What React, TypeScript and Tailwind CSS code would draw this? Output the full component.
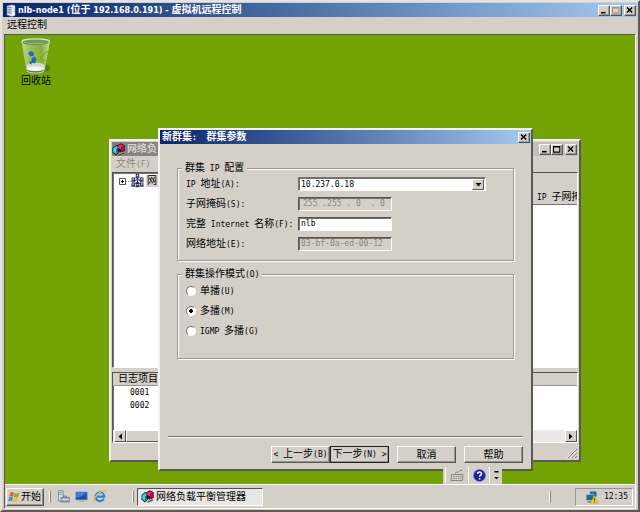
import type { ReactNode } from "react";
import { clsx } from "clsx";

const RAISED = "border border-t-white border-l-white border-r-[#555555] border-b-[#555555] bg-[#d4d0c8]";
const SUNKEN = "border border-t-[#555555] border-l-[#555555] border-r-white border-b-white";

// Latin runs are set in the narrow fixed-width face, Chinese runs in the larger one
function Mixed({ text, latin }: { text: string; latin?: string }) {
  return (
    <span className="whitespace-pre">
      {text.split(/([\x20-\x7e]+)/).map((part, index) =>
        index % 2 ? (
          <span key={index} className={latin ?? "font-['DejaVu_Sans_Mono','Liberation_Mono',monospace] text-[8px]"}>
            {part}
          </span>
        ) : (
          part
        ),
      )}
    </span>
  );
}

function CaptionButton({ kind, disabled }: { kind: "min" | "max" | "close"; disabled?: boolean }) {
  const labels = { min: "最小化", max: "最大化", close: "关闭" };
  const stroke = disabled ? "#9a968e" : "#000";

  return (
    <button aria-label={labels[kind]} className={clsx(RAISED, "flex h-[11px] w-3 items-center justify-center shadow-[inset_-1px_-1px_0_#a09c94]")}>
      <svg width="10" height="9" viewBox="0 0 10 9" fill="none" stroke={stroke}>
        {kind === "min" && <path d="M2 6.7h4.6" strokeWidth="1.6" />}
        {kind === "max" && <path d="M1.5 1.5h6.3v5.6H1.5zM1.5 2h6.3" strokeWidth="1.1" />}
        {kind === "close" && <path d="M2 1.5l5.2 5M7.2 1.5l-5.2 5" strokeWidth="1.5" />}
      </svg>
    </button>
  );
}

function ClusterIcon() {
  return (
    <svg width="13" height="13" viewBox="0 0 13 13">
      <path d="M.5 5 4 2l3 1v6.500L4 12.500.500 9.500z" fill="#0d1c24" />
      <path d="M1.200 5.200 4.200 3l2 1v5L4 11.300 1.200 9z" fill="#39d6dc" />
      <path d="M4 6.500l2.500-1.500v4.500L4 11.300z" fill="#167f8c" />
      <path d="M5.500 2 9 .3l3.700 2V8L9 9.800 5.500 8z" fill="#3a0820" />
      <path d="M6 2.600 9 1.200l2.900 1.600V5L9 6.500 6 5z" fill="#ea2a72" />
      <path d="M9 3.800l3-1.300v5L9 9z" fill="#a50f3e" />
      <path d="M6.500 10.500l5-2v2.200l-4 1.800z" fill="#c9a24a" />
      <path d="M6.500 12.300 12 10" stroke="#222" strokeWidth=".8" />
    </svg>
  );
}

function ServerIcon() {
  return (
    <svg width="10" height="13" viewBox="0 0 10 13">
      <path d="M1 2l5-1.3 3 1v9.8L5.5 12.5 1 11z" fill="#dfe8f4" stroke="#7388ad" strokeWidth=".6" />
      <path d="M1.5 3.5h4M1.5 5.3h4M1.5 7.1h4M1.5 8.9h4" stroke="#5572a5" strokeWidth=".8" />
      <path d="M6 2v10l3-1V2z" fill="#f9fbff" />
      <path d="M6.5 4H9M6.5 6H9M6.5 8H9" stroke="#8ea0bf" strokeWidth=".6" />
    </svg>
  );
}

function NetworkIcon() {
  return (
    <svg width="13" height="14" viewBox="0 0 13 14">
      <path d="M6.500 4v8M2.500 7l4-1.500 4 1.500M3 10l3.500-2 3.500 2" stroke="#2222c4" strokeWidth="1" fill="none" />
      {[
        [6.5, 1.9],
        [2.3, 5.2],
        [10.7, 5.2],
        [2.3, 10.2],
        [10.7, 10.2],
        [6.5, 10.8],
      ].map(([x, y]) => (
        <g key={`${x}-${y}`}>
          <rect x={x - 1.3} y={y - 1.3} width="2.6" height="2.3" fill="#d5d8f4" stroke="#1a1a2a" strokeWidth=".8" />
          <path d={`M${x - 2} ${y + 1.9}h4`} stroke="#111" strokeWidth="1" />
        </g>
      ))}
    </svg>
  );
}

function RecycleBinIcon() {
  return (
    <svg width="30" height="36" viewBox="0 0 30 36">
      <defs>
        <linearGradient id="glass" x1="0" x2="1">
          <stop offset="0" stopColor="#c4dba2" stopOpacity=".9" />
          <stop offset=".35" stopColor="#9cc766" stopOpacity=".75" />
          <stop offset=".7" stopColor="#8dba48" stopOpacity=".7" />
          <stop offset="1" stopColor="#cfe2b4" stopOpacity=".9" />
        </linearGradient>
      </defs>
      <ellipse cx="23" cy="30" rx="6.500" ry="4" fill="#4c7503" opacity=".7" />
      <path d="M1 3.500 6 33c1 3 15.500 3 17 0L28.500 3.500z" fill="url(#glass)" stroke="#b5cf8c" strokeWidth=".8" />
      <path d="M5.500 27c5-3 13-3 18.500 0l-1 6c-3 2.500-14 2.500-17 0z" fill="#d9dfd8" opacity=".9" />
      <path d="M6 30c4-2 13-2 17.500 0l-.5 3c-3 2.500-14 2.500-17 0z" fill="#f3f5f3" />
      <path d="M6 32.500c3 3 14 3 17 0v-1c-4 2-13 2-17 0z" fill="#6b736b" />
      <path d="M7 15l3-2 3 2-.5 3-3 .5zM11 20l3-1.500 1.500 3-1.500 4-4-1zM8 23l2 1 1 2.500-2-.5z" fill="#2265c4" />
      <path d="M27 13 19 20l5 3" stroke="#6d9f22" strokeWidth="1" fill="none" />
      <ellipse cx="14.800" cy="3.500" rx="13.800" ry="2.600" fill="#6f9a55" stroke="#d5e0cb" strokeWidth="1.100" />
      <path d="M2 4.500c3 2.500 22 2.500 25.500 0" stroke="#4d6650" strokeWidth=".9" fill="none" />
    </svg>
  );
}

function StartIcon() {
  return (
    <svg width="12" height="12" viewBox="0 0 12 12">
      <path d="M2.300 1.600C4 .8 5 1 6 1.700L5 5.700C4 5 3 5 1.300 5.600z" fill="#e9602c" />
      <path d="M6.600 2c1.400.7 2.800.6 4.800-.2l-1 4C8.700 6.600 7 6.600 5.700 6z" fill="#7cb342" />
      <path d="M1.100 6.300C3 5.500 4 5.700 4.900 6.300L4 10.200C3 9.500 1.800 9.500.2 10.200z" fill="#3f8fdc" />
      <path d="M5.500 6.700c1.500.8 2.900.6 4.700-.1l-1 4c-1.800.8-3.400.7-4.700 0z" fill="#f6bd28" />
    </svg>
  );
}

function QuickLaunch() {
  return (
    <div className="flex items-center gap-[5px]">
      <button aria-label="服务器管理器">
        <svg width="13" height="13" viewBox="0 0 13 13">
          <path d="M1.500.8h4.700V11H1.500z" fill="#d7dee4" stroke="#6f7f8b" strokeWidth=".8" />
          <path d="M2 2.500h3.600M2 4.300h3.600" stroke="#7d93a5" strokeWidth=".8" />
          <path d="M4 7.500h8.300v4.500H4z" fill="#9aa8b2" stroke="#5f6f7a" strokeWidth=".7" />
          <path d="M4.500 9.300h7.400" stroke="#e9eef1" strokeWidth=".8" />
          <path d="M6.500 7.300V6.200h3v1.100" stroke="#5f6f7a" strokeWidth=".8" fill="none" />
        </svg>
      </button>
      <button aria-label="显示桌面">
        <svg width="13" height="13" viewBox="0 0 13 13">
          <path d="M.7 2h11.600v8H.7z" fill="#1b4fae" stroke="#8aa5cf" strokeWidth=".8" />
          <path d="M1.300 2.500h10.200L7 6 1.300 8z" fill="#3f80dc" />
          <path d="M4 11.300h5.500" stroke="#a3adba" strokeWidth="1" />
        </svg>
      </button>
      <button aria-label="Internet Explorer">
        <svg width="14" height="13" viewBox="0 0 14 13" fill="none">
          <path d="M10.800 8.600A4.300 4.300 0 1 1 11.200 6.700H4.200" stroke="#1c86d8" strokeWidth="2.200" />
          <path d="M10 4.200a4.300 4.300 0 0 0-6.800 1" stroke="#7cc8f4" strokeWidth=".9" />
          <path d="M1.500 11.800C-.3 9.800 4 3.500 9 1.300c2.500-1.100 4-.6 3.600 1.200" stroke="#edb52e" strokeWidth="1.200" />
        </svg>
      </button>
    </div>
  );
}

function TrayIcon() {
  return (
    <svg width="14" height="14" viewBox="0 0 14 14">
      <rect x="4.500" y="1" width="7.500" height="6" rx=".6" fill="#2c6ea5" stroke="#c8d7e2" strokeWidth=".8" />
      <rect x="1.200" y="4.500" width="7.500" height="6" rx=".6" fill="#1e6796" stroke="#a8bccb" strokeWidth=".8" />
      <path d="M2.500 12h5" stroke="#587082" strokeWidth="1.200" />
      <path d="M9.300 5.800 13.400 13H5.400z" fill="#f7d62f" stroke="#b8931a" strokeWidth=".6" />
      <path d="M9.400 8.200v2.400M9.400 11.300v1" stroke="#332a00" strokeWidth="1" />
    </svg>
  );
}

function PushButton({ children, isDefault }: { children: ReactNode; isDefault?: boolean }) {
  return (
    <button
      className={clsx(
        RAISED,
        "flex h-[17px] w-[59px] items-center justify-center whitespace-nowrap shadow-[inset_-1px_-1px_0_#9a968e]",
        isDefault && "outline outline-1 -outline-offset-1 outline-[#222222]",
      )}
    >
      {children}
    </button>
  );
}

function GroupBox({ title, className, children }: { title: string; className?: string; children: ReactNode }) {
  return (
    <fieldset className="min-w-0 border border-[#9a968e] pr-2 pl-2 shadow-[1px_1px_0_#ffffff,inset_1px_1px_0_#ffffff]">
      <legend className="-ml-1 h-3 bg-[#d4d0c8] px-[3px] leading-3">
        <Mixed text={title} />
      </legend>
      <div className={className}>{children}</div>
    </fieldset>
  );
}

const FIELD = "h-[14px] w-[94px] px-[2px] text-[8px] font-['DejaVu_Sans_Mono','Liberation_Mono',monospace] shadow-[inset_1px_1px_0_#77736b]";

const modes = [
  { id: "unicast", label: "单播(U)" },
  { id: "multicast", label: "多播(M)" },
  { id: "igmp", label: "IGMP 多播(G)" },
];

function ClusterDialog() {
  return (
    <section className="absolute top-[93px] left-[153px] w-[375px] border-2 border-t-[#f4f2ee] border-r-[#5c5a55] border-b-[#5c5a55] border-l-[#f4f2ee] bg-[#d4d0c8]">
      <header className="flex h-[14px] items-center justify-between bg-linear-to-r from-[#0a246a] to-[#a6caf0] pr-px pl-[2px] font-bold text-white">
        <h2>
          <Mixed text="新群集:  群集参数" />
        </h2>
        <CaptionButton kind="close" />
      </header>

      <form className="flex flex-col pt-[18px] pb-[6px]">
        <div className="flex flex-col gap-[7px] px-[17px]">
          <GroupBox title="群集 IP 配置" className="grid auto-rows-[14px] grid-cols-[112px_1fr] items-center gap-y-[6px] pt-[3px] pb-[9px] leading-[14px]">
            <label htmlFor="ip">
              <Mixed text="IP 地址(A):" />
            </label>
            <div className="relative h-[14px] w-[188px]">
              <select id="ip" className={clsx(FIELD, "block w-full appearance-none border border-white border-t-[#77736b] border-l-[#77736b] bg-white")}>
                <option>10.237.0.18</option>
              </select>
              <span className={clsx(RAISED, "pointer-events-none absolute top-[2px] right-[2px] flex h-[11px] w-3 items-center justify-center")}>
                <svg width="7" height="4" viewBox="0 0 7 4">
                  <path d="M.5 0h6l-3 3.500z" />
                </svg>
              </span>
            </div>
            <label htmlFor="mask">
              <Mixed text="子网掩码(S):" />
            </label>
            <input id="mask" disabled defaultValue="255 .255 . 0  . 0" className={clsx(SUNKEN, FIELD, "pl-[4px] text-[#8c8880]")} />
            <label htmlFor="name">
              <Mixed text="完整 Internet 名称(F):" />
            </label>
            <input id="name" defaultValue="nlb" className={clsx(SUNKEN, FIELD, "bg-white")} />
            <label htmlFor="mac">
              <Mixed text="网络地址(E):" />
            </label>
            <input id="mac" disabled defaultValue="03-bf-0a-ed-00-12" className={clsx(SUNKEN, FIELD, "text-[#8c8880]")} />
          </GroupBox>

          <GroupBox title="群集操作模式(O)" className="flex flex-col gap-[6px] pt-1 pb-5 leading-[14px]">
            {modes.map((mode) => (
              <label key={mode.id} className="flex h-[14px] items-center gap-1">
                <input
                  type="radio"
                  name="mode"
                  defaultChecked={mode.id === "multicast"}
                  className="size-[10px] appearance-none rounded-full border border-t-[#77736b] border-r-white border-b-white border-l-[#77736b] bg-white checked:bg-[radial-gradient(circle,#000_0_2px,#fff_2px)]"
                />
                <Mixed text={mode.label} />
              </label>
            ))}
          </GroupBox>
        </div>

        <div className="mx-2 mt-[77px] border-t border-[#77736b] border-b border-b-white" />

        <div className="mt-2 flex justify-end gap-2 px-2">
          <div className="flex">
            <PushButton>
              <Mixed text="< 上一步(B)" />
            </PushButton>
            <PushButton isDefault>
              <Mixed text="下一步(N) >" />
            </PushButton>
          </div>
          <PushButton>取消</PushButton>
          <PushButton>帮助</PushButton>
        </div>
      </form>
    </section>
  );
}

function ManagerWindow() {
  return (
    <section className="absolute top-[104px] left-[104px] w-[472px] border-2 border-t-[#f4f2ee] border-r-[#5c5a55] border-b-[#5c5a55] border-l-[#f4f2ee] bg-[#d4d0c8] p-px">
      <header className="flex h-[14px] items-center justify-between bg-linear-to-r from-[#808080] to-[#c9c6bf] pr-px text-[#d4d0c8]">
        <h2 className="flex items-center gap-[2px] font-bold">
          <ClusterIcon />
          网络负
        </h2>
        <div className="flex">
          <CaptionButton kind="min" />
          <CaptionButton kind="max" />
          <span className="w-[2px]" />
          <CaptionButton kind="close" />
        </div>
      </header>
      <nav className="h-4 pl-1 leading-4 text-[#8c8880]">
        <button>
          <Mixed text="文件(F)" />
        </button>
      </nav>

      <div className="flex h-[196px]">
        <div className={clsx(SUNKEN, "w-40 bg-white shadow-[inset_1px_1px_0_#77736b]")}>
          <div className="flex items-center pt-px pl-[6px]">
            <svg width="7" height="7" viewBox="0 0 7 7" fill="none" stroke="#555">
              <path d="M.5.5h6v6h-6z" />
              <path d="M2 3.500h3M3.500 2v3" stroke="#000" />
            </svg>
            <span className="w-[5px] border-t border-dotted border-[#9a968e]" />
            <NetworkIcon />
            <span className="ml-[2px] bg-[#d4d0c8] px-px leading-3">网</span>
          </div>
        </div>
        <div className={clsx(SUNKEN, "flex min-w-0 flex-1 flex-col bg-white")}>
          <div className="h-[18px] shrink-0 bg-[#d4d0c8]" />
          <table className="w-full table-fixed bg-[#d4d0c8] text-left leading-3">
            <thead>
              <tr className="border-b border-[#77736b]">
                <td />
                <th className="w-10 overflow-hidden p-0 font-normal">
                  <Mixed text="IP 子网掩" />
                </th>
              </tr>
            </thead>
          </table>
        </div>
      </div>

      <div className={clsx(SUNKEN, "mt-1 flex h-[71px] flex-col bg-white shadow-[inset_1px_1px_0_#77736b]")}>
        <table className="w-full text-left">
          <thead className="bg-[#d4d0c8] leading-3">
            <tr className="border-b border-[#9a968e]">
              <th className="p-0 pl-[5px] font-normal">日志项目</th>
            </tr>
          </thead>
          <tbody className="font-['DejaVu_Sans_Mono','Liberation_Mono',monospace] text-[8px] leading-[13px]">
            <tr>
              <td className="p-0 pl-[17px]">0001</td>
            </tr>
            <tr>
              <td className="p-0 pl-[17px]">0002</td>
            </tr>
          </tbody>
        </table>
        <div className="mt-auto flex h-3 justify-between bg-[#ebe9e5] pl-px">
          <button aria-label="向左滚动" className={clsx(RAISED, "flex w-3 items-center justify-center")}>
            <svg width="4" height="7" viewBox="0 0 4 7">
              <path d="M4 .5v6l-3.500-3z" />
            </svg>
          </button>
          <span className={clsx(RAISED, "mr-auto w-60")} />
          <button aria-label="向右滚动" className={clsx(RAISED, "flex w-3 items-center justify-center")}>
            <svg width="4" height="7" viewBox="0 0 4 7">
              <path d="M0 .5v6l3.500-3z" />
            </svg>
          </button>
        </div>
      </div>

      <footer className="flex h-4 items-end justify-end">
        <svg width="11" height="11" viewBox="0 0 11 11" stroke="#85817a">
          <path d="M1 10l9-9M4.500 10 10 4.500M8 10l2-2" />
          <path d="M0 10l9-9M3.500 10 10 3.500" stroke="#fff" strokeWidth=".6" />
        </svg>
      </footer>
    </section>
  );
}

function LanguageBar() {
  return (
    <div className="absolute right-[133px] bottom-0 flex h-[18px] w-[59px] items-center bg-[#d4d0c8] pl-[2px]">
      <span className="h-4 w-px bg-white" />
      <button aria-label="键盘" className="flex w-[22px] justify-center">
        <svg width="15" height="13" viewBox="0 0 15 13" fill="none" stroke="#8c8880">
          <path d="M1.500 5.500h11.500l-.5 6H1z" />
          <path d="M3 7.500h8.500M3 9.500h8.500" strokeDasharray="1.500 1" />
          <path d="M5.500 5c0-3 2-1 3-2s2-2 3.500-1.500" />
        </svg>
      </button>
      <span className="h-4 w-px bg-white" />
      <button aria-label="帮助" className="flex w-[20px] justify-center">
        <svg width="13" height="13" viewBox="0 0 13 13">
          <circle cx="6.500" cy="6.500" r="6" fill="#16259b" stroke="#7784c8" strokeWidth=".6" />
          <path d="M4.600 5c0-2.600 4-2.500 3.900-.1 0 1.300-1.900 1.300-1.900 2.900M6.600 8.900v1.500" stroke="#fff" strokeWidth="1.500" fill="none" />
        </svg>
      </button>
      <span className="h-4 w-px bg-white" />
      <button aria-label="选项" className="flex flex-1 justify-center">
        <svg width="5" height="11" viewBox="0 0 5 11">
          <path d="M.5 1h4v1.500h-4zM.3 7h4.400L2.500 9.300z" />
        </svg>
      </button>
    </div>
  );
}

function Grip() {
  return <span className="h-3 w-[2px] border-r border-[#85817a] bg-white" />;
}

function Taskbar() {
  return (
    <footer className="flex h-6 shrink-0 items-center border-t border-white bg-[#d4d0c8] pr-[2px] pl-px">
      <button className={clsx(RAISED, "flex h-[18px] w-[38px] items-center gap-px whitespace-nowrap pl-px shadow-[inset_-1px_-1px_0_#9a968e]")}>
        <StartIcon />
        开始
      </button>
      <div className="flex flex-1 items-center pl-[5px]">
        <Grip />
        <div className="w-[81px] pl-[6px]">
          <QuickLaunch />
        </div>
        <Grip />
        <button className={clsx(SUNKEN, "ml-[3px] flex h-[18px] w-[126px] items-center gap-[2px] bg-[#e9e7e3] pl-[3px] whitespace-nowrap")}>
          <ClusterIcon />
          网络负载平衡管理器
        </button>
      </div>
      <Grip />
      <div className="ml-6 flex h-[18px] w-[58px] items-center justify-between border border-t-[#9a968e] border-r-white border-b-white border-l-[#9a968e] pr-1 pl-[9px]">
        <TrayIcon />
        <Mixed text="12:35" />
      </div>
    </footer>
  );
}

export default function App() {
  return (
    <main className="flex h-screen cursor-default flex-col border-2 border-t-[#e6e3dd] border-r-[#5c5a55] border-b-[#5c5a55] border-l-[#e6e3dd] bg-[#d4d0c8] p-px font-['Liberation_Sans','Noto_Sans_CJK_SC',sans-serif] text-[10px] leading-3 text-black">
      <header className="flex h-[14px] shrink-0 items-center justify-between bg-linear-to-r from-[#0a246a] to-[#a6caf0] pr-px pl-[3px] text-white">
        <h1 className="flex items-center gap-[2px] font-bold">
          <ServerIcon />
          <Mixed text="nlb-node1 (位于 192.168.0.191) - 虚拟机远程控制" latin="font-['DejaVu_Sans_Condensed','Liberation_Sans',sans-serif] text-[9px]" />
        </h1>
        <div className="flex">
          <CaptionButton kind="min" />
          <CaptionButton kind="max" disabled />
          <span className="w-[2px]" />
          <CaptionButton kind="close" />
        </div>
      </header>
      <nav className="h-[17px] shrink-0 pl-1 leading-4">
        <button>远程控制</button>
      </nav>

      <div className={clsx(SUNKEN, "mx-px flex min-h-0 flex-1 flex-col")}>
        <div className="relative flex-1 overflow-hidden bg-[#72a303]">
          <button className="mt-[3px] ml-4 flex flex-col items-center gap-px">
            <RecycleBinIcon />
            回收站
          </button>
          <ManagerWindow />
          <ClusterDialog />
          <LanguageBar />
        </div>
        <Taskbar />
      </div>
    </main>
  );
}
